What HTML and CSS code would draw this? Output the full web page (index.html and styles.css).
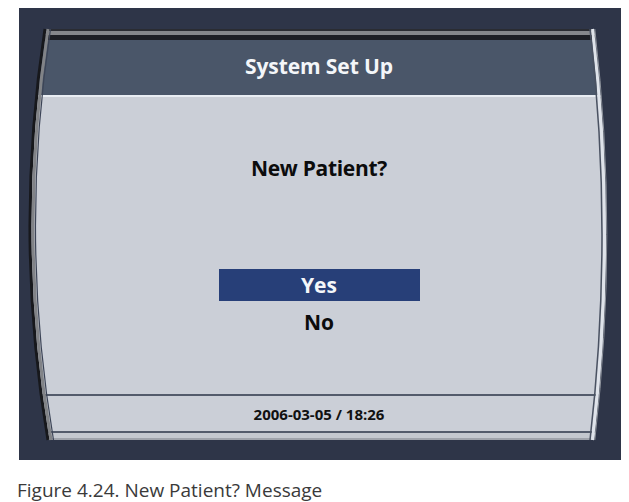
FILE: index.html
```html
<!DOCTYPE html>
<html>
<head>
<meta charset="utf-8">
<link rel="stylesheet" href="styles.css">
</head>
<body>
<div class="frame">
  <div class="screen-wrap">
    <div class="screen">
      <div class="bezel-top"></div>
      <div class="title-bar">System Set Up</div>
      <div class="title-hilite"></div>
      <div class="content">
        <div class="question">New Patient?</div>
        <div class="option selected">Yes</div>
        <div class="option">No</div>
      </div>
      <div class="sep"></div>
      <div class="footer">2006-03-05 / 18:26</div>
      <div class="sep"></div>
      <div class="bezel-bottom"></div>
    </div>
    <svg class="bezel" width="580" height="411" viewBox="0 0 580 411">
      <g fill="none">
        <path d="M16,0 Q-15.5,206.5 19,411" stroke="#17181c" stroke-width="3"/>
        <path d="M19,0 Q-12.5,206.5 22,411" stroke="#818387" stroke-width="3"/>
        <path d="M21.5,0 Q-10,206.5 24.5,411" stroke="#3c4456" stroke-width="1.2"/>
        <path d="M565.8,0 Q589.8,205.5 565.8,411" stroke="#8e939c" stroke-width="1"/>
        <path d="M563.5,0 Q587.5,205.5 563.5,411" stroke="#dfe3ea" stroke-width="3"/>
        <path d="M561,0 Q585,205.5 561,411" stroke="#4a5262" stroke-width="1.5"/>
      </g>
    </svg>
  </div>
</div>
<p class="caption">Figure 4.24. New Patient? Message</p>
</body>
</html>
```

FILE: styles.css
```css
html, body {
  margin: 0;
  padding: 0;
  background: #ffffff;
}

.frame {
  margin: 8px 0 0 19px;
  width: 602px;
  height: 452px;
  box-sizing: border-box;
  padding-top: 21px;
  background: #2e3548;
}

.screen-wrap {
  position: relative;
  margin-left: 10px;
  width: 580px;
  height: 411px;
}

.screen {
  height: 100%;
  display: flex;
  flex-direction: column;
  clip-path: path('M16,0 L565,0 Q589,205.5 565,411 L19,411 Q-15.5,206.5 16,0 Z');
  background: #cbcfd7;
  font-family: "Open Sans", "DejaVu Sans", sans-serif;
  font-weight: 700;
}

.bezel {
  position: absolute;
  left: 0;
  top: 0;
  overflow: visible;
}

.bezel-top {
  height: 11px;
  flex: none;
  background: linear-gradient(to bottom, #2a2c32 0 2px, #85878b 2px 6px, #1d1f25 6px 11px);
}

.title-bar {
  height: 55px;
  flex: none;
  box-sizing: border-box;
  padding-bottom: 4px;
  display: flex;
  align-items: center;
  justify-content: center;
  background: #4a5669;
  color: #f4f6f9;
  font-size: 21px;
  letter-spacing: -0.1px;
}

.title-hilite {
  height: 2px;
  flex: none;
  background: #e9edf3;
}

.content {
  height: 297px;
  flex: none;
  box-sizing: border-box;
  padding-top: 57px;
  display: flex;
  flex-direction: column;
  align-items: center;
  color: #0c0c0c;
  font-size: 21px;
}

.question {
  line-height: 28px;
  letter-spacing: -0.3px;
}

.option {
  width: 201px;
  height: 32px;
  line-height: 32px;
  text-align: center;
  margin-top: 5px;
}

.option.selected {
  margin-top: 87px;
  background: #273f78;
  color: #f4f6f9;
}

.sep {
  height: 2px;
  flex: none;
  background: #535b6b;
}

.footer {
  height: 35px;
  flex: none;
  display: flex;
  align-items: center;
  justify-content: center;
  color: #111111;
  font-size: 15px;
}

.bezel-bottom {
  height: 7px;
  flex: none;
  background: linear-gradient(to bottom, #c4c8cf 0 5px, #9ea2aa 5px 7px);
}

.caption {
  margin: 18px 0 0 17px;
  font-family: "Open Sans", "DejaVu Sans", sans-serif;
  font-weight: 400;
  font-size: 19px;
  line-height: 24px;
  color: #3a3a3a;
}
```
